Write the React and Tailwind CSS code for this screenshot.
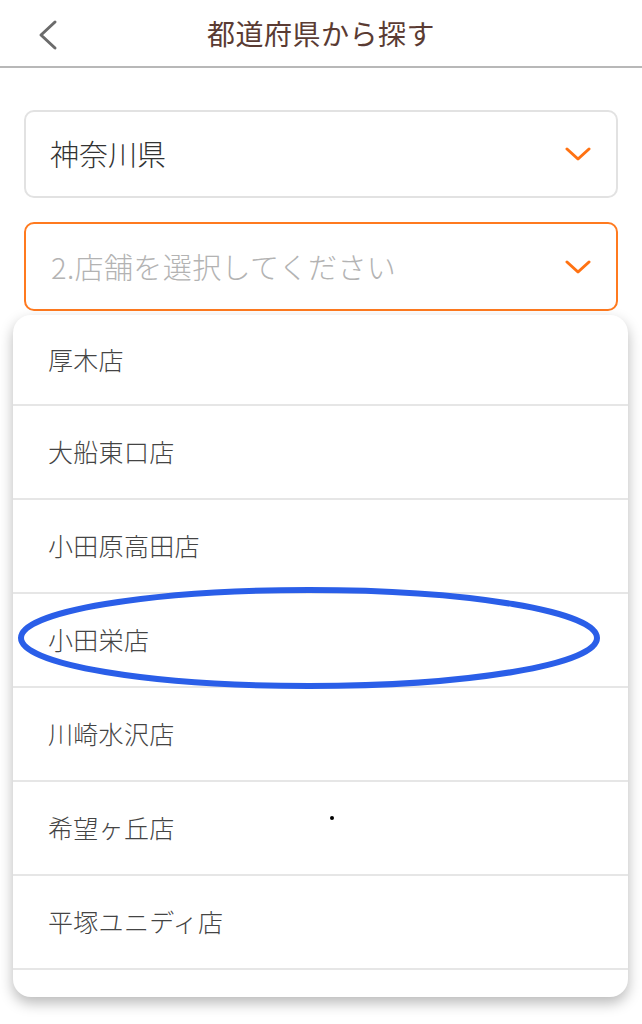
import React from 'react';

const STORES = ['厚木店', '大船東口店', '小田原高田店', '小田栄店', '川崎水沢店', '希望ヶ丘店', '平塚ユニディ店'];

function OrangeChevron() {
  return (
    <svg width="26" height="16" viewBox="0 0 26 16" fill="none">
      <path d="M2 3 L13 13 L24 3" stroke="#ff7212" strokeWidth="3" strokeLinecap="round" strokeLinejoin="round" />
    </svg>
  );
}

export default function App() {
  return (
    <div className="relative w-[642px] h-[1024px] overflow-hidden bg-white font-['Noto_Sans_CJK_JP','Noto_Sans',sans-serif]">
      {/* Header */}
      <header className="relative flex h-[68px] items-center justify-center border-b-2 border-[#b8b8b8]">
        <button className="absolute left-[34px] top-[18px] flex h-[34px] w-[28px] items-center justify-center">
          <svg width="24" height="32" viewBox="0 0 24 32" fill="none">
            <path d="M19 3 L5 16 L19 29" stroke="#6b6b6b" strokeWidth="3" strokeLinecap="round" strokeLinejoin="round" />
          </svg>
        </button>
        <h1 className="text-[28px] leading-none text-[#5a3b33] tracking-[0.5px]">都道府県から探す</h1>
      </header>

      {/* Selects */}
      <div className="px-6 pt-[42px]">
        <div className="flex h-[88px] items-center justify-between rounded-[10px] border-2 border-[#e2e2e2] pl-[24px] pr-[25px]">
          <span className="text-[29px] font-light text-[#333333]">神奈川県</span>
          <OrangeChevron />
        </div>
        <div className="mt-[24px] flex h-[89px] items-center justify-between rounded-[10px] border-2 border-[#ff7a1f] pl-[25px] pr-[25px]">
          <span className="text-[29px] font-light tracking-[0.4px] text-[#b3b3b3]">2.店舗を選択してください</span>
          <OrangeChevron />
        </div>
      </div>

      {/* Dropdown list */}
      <div className="ml-[13px] mr-[14px] mt-[4px] overflow-hidden rounded-[18px] bg-white shadow-[0_6px_14px_rgba(0,0,0,0.28)]">
        {STORES.map((name, i) => (
          <div
            key={name}
            className={`flex items-center border-b-2 border-[#e6e6e6] pl-[35px] text-[25px] font-light tracking-[0.3px] text-[#444444] ${i === 0 ? 'h-[91px]' : 'h-[94px]'}`}
          >
            {name}
          </div>
        ))}
        <div className="h-[27px]" />
      </div>

      {/* Annotation ellipse */}
      <svg className="pointer-events-none absolute left-0 top-0" width="642" height="1024">
        <ellipse cx="309" cy="638" rx="288" ry="48" fill="none" stroke="#2a5ee8" strokeWidth="6" />
      </svg>
      <div className="absolute left-[330px] top-[816px] h-[4px] w-[4px] rounded-full bg-black" />
    </div>
  );
}
